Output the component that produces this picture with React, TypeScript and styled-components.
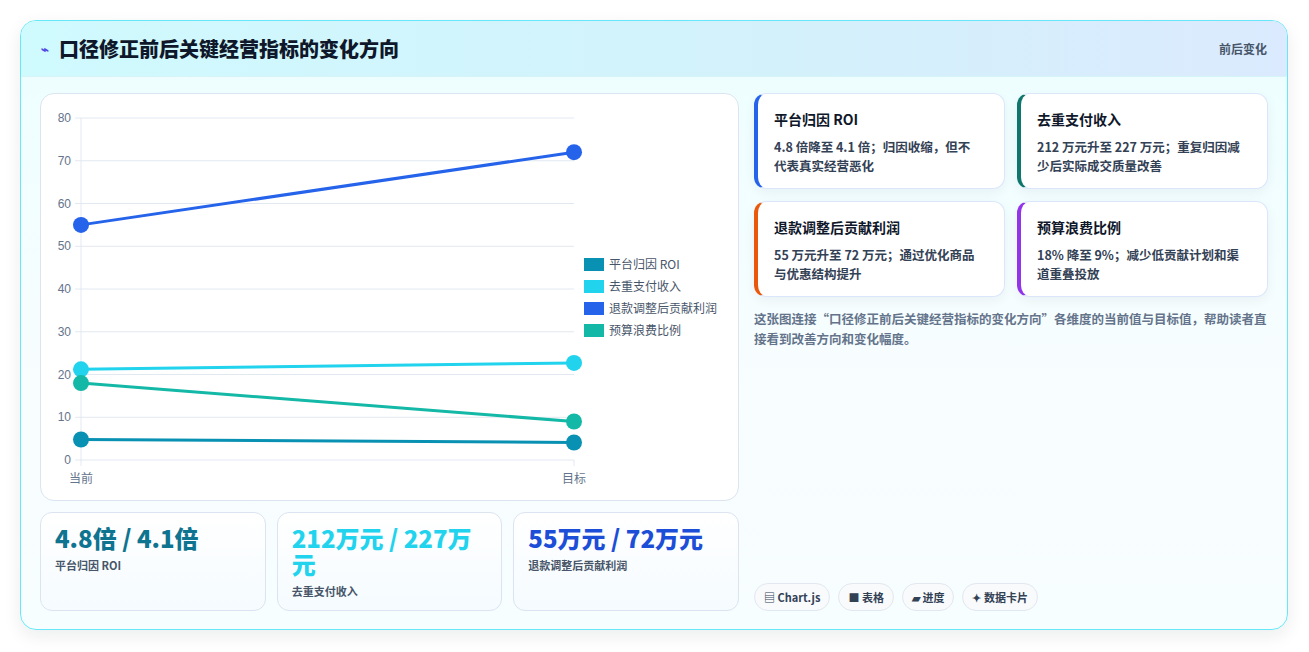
import React from 'react';
import styled, { createGlobalStyle } from 'styled-components';

const Global = createGlobalStyle`
  body { margin: 0; background: #f1f2f4; font-family: "Noto Sans CJK SC", "Noto Sans", sans-serif; }
`;

const series = [
  { name: '平台归因 ROI', color: '#0891b2', a: 4.8, b: 4.1 },
  { name: '去重支付收入', color: '#22d3ee', a: 21.2, b: 22.7 },
  { name: '退款调整后贡献利润', color: '#2563eb', a: 55, b: 72 },
  { name: '预算浪费比例', color: '#14b8a6', a: 18, b: 9 },
];

const insights = [
  { title: '平台归因 ROI', text: '4.8 倍降至 4.1 倍；归因收缩，但不代表真实经营恶化', color: '#2563eb' },
  { title: '去重支付收入', text: '212 万元升至 227 万元；重复归因减少后实际成交质量改善', color: '#0f766e' },
  { title: '退款调整后贡献利润', text: '55 万元升至 72 万元；通过优化商品与优惠结构提升', color: '#ea580c' },
  { title: '预算浪费比例', text: '18% 降至 9%；减少低贡献计划和渠道重叠投放', color: '#9333ea' },
];

const stats = [
  { value: '4.8倍 / 4.1倍', label: '平台归因 ROI', color: '#0e7490' },
  { value: '212万元 / 227万元', label: '去重支付收入', color: '#22d3ee' },
  { value: '55万元 / 72万元', label: '退款调整后贡献利润', color: '#1d4ed8' },
];

const chips = ['▤ Chart.js', '■ 表格', '▰ 进度', '✦ 数据卡片'];

const X0 = 40, X1 = 533, Y0 = 366, PER = 342 / 80;
const yOf = (v: number) => Y0 - v * PER;

function Chart() {
  return (
    <svg width="698" height="406" viewBox="0 0 698 406">
      {[0, 10, 20, 30, 40, 50, 60, 70, 80].map((t) => (
        <g key={t}>
          <line x1={X0 - 6} x2={X1} y1={yOf(t)} y2={yOf(t)} stroke="#e2e8f0" />
          <text x={X0 - 10} y={yOf(t) + 4} textAnchor="end" fontSize="12" fill="#64748b" fontFamily="Liberation Sans, sans-serif">{t}</text>
        </g>
      ))}
      <line x1={X0} x2={X0} y1={yOf(80)} y2={Y0 + 6} stroke="#e2e8f0" />
      <line x1={X1} x2={X1} y1={Y0} y2={Y0 + 6} stroke="#e2e8f0" />
      <text x={X0} y={Y0 + 23} textAnchor="middle" fontSize="12" fill="#64748b">当前</text>
      <text x={X1} y={Y0 + 23} textAnchor="middle" fontSize="12" fill="#64748b">目标</text>
      {series.map((s) => (
        <g key={s.name}>
          <line x1={X0} x2={X1} y1={yOf(s.a)} y2={yOf(s.b)} stroke={s.color} strokeWidth="3" />
          <circle cx={X0} cy={yOf(s.a)} r="8" fill={s.color} />
          <circle cx={X1} cy={yOf(s.b)} r="8" fill={s.color} />
        </g>
      ))}
      {series.map((s, i) => (
        <g key={s.name + 'l'}>
          <rect x={543} y={164 + i * 22} width={20} height={13} fill={s.color} />
          <text x={568} y={175 + i * 22} fontSize="12" fill="#475569">{s.name}</text>
        </g>
      ))}
    </svg>
  );
}

export default function App() {
  return (
    <>
      <Global />
      <Page>
        <Panel>
          <Header>
            <Title><Bolt>⌁</Bolt>口径修正前后关键经营指标的变化方向</Title>
            <Tag>前后变化</Tag>
          </Header>
          <Body>
            <LeftCol>
              <ChartCard><Chart /></ChartCard>
              <StatRow>
                {stats.map((s) => (
                  <StatCard key={s.label}>
                    <StatValue color={s.color}>{s.value}</StatValue>
                    <StatLabel>{s.label}</StatLabel>
                  </StatCard>
                ))}
              </StatRow>
            </LeftCol>
            <RightCol>
              <InsightGrid>
                {insights.map((c) => (
                  <Insight key={c.title} accent={c.color}>
                    <InsightTitle>{c.title}</InsightTitle>
                    <InsightText>{c.text}</InsightText>
                  </Insight>
                ))}
              </InsightGrid>
              <Desc>这张图连接“口径修正前后关键经营指标的变化方向”各维度的当前值与目标值，帮助读者直接看到改善方向和变化幅度。</Desc>
              <Chips>
                {chips.map((c) => <Chip key={c}>{c}</Chip>)}
              </Chips>
            </RightCol>
          </Body>
        </Panel>
      </Page>
    </>
  );
}

const Page = styled.div`
  padding: 20px 20px 0 20px;
  height: 632px;
  background: #fff;
  border-bottom: 1px solid #e5e7eb;
`;

const Panel = styled.div`
  width: 1268px;
  height: 610px;
  box-sizing: border-box;
  border: 1px solid #67e8f9;
  border-radius: 16px;
  overflow: hidden;
  background: linear-gradient(180deg, #ecfeff 0%, #f8fdff 60%, #f7feff 100%);
  box-shadow: 0 6px 18px rgba(15, 23, 42, 0.08);
  display: flex;
  flex-direction: column;
`;

const Header = styled.div`
  height: 55px;
  flex: none;
  display: flex;
  align-items: center;
  justify-content: space-between;
  padding: 0 20px;
  background: linear-gradient(90deg, #cffafe 0%, #d3f1fb 60%, #dbeafe 100%);
  border-bottom: 1px solid #d6f3f8;
`;

const Title = styled.h1`
  margin: 0;
  font-size: 20px;
  font-weight: 800;
  color: #0f172a;
  display: flex;
  align-items: center;
  gap: 10px;
`;

const Bolt = styled.span`
  font-size: 13px;
  color: #4f46e5;
`;

const Tag = styled.span`
  font-size: 12px;
  font-weight: 700;
  color: #475569;
`;

const Body = styled.div`
  flex: 1;
  display: flex;
  gap: 15px;
  padding: 16px 19px 19px 19px;
`;

const LeftCol = styled.div`
  width: 699px;
  display: flex;
  flex-direction: column;
  gap: 11px;
`;

const ChartCard = styled.div`
  height: 408px;
  box-sizing: border-box;
  background: #fff;
  border: 1px solid #dbe4f0;
  border-radius: 14px;
  overflow: hidden;
`;

const StatRow = styled.div`
  display: grid;
  grid-template-columns: repeat(3, 1fr);
  gap: 11px;
`;

const StatCard = styled.div`
  height: 99px;
  box-sizing: border-box;
  padding: 12px 14px;
  border: 1px solid #dbe4f0;
  border-radius: 12px;
  background: linear-gradient(180deg, #fff, #f5fbff);
`;

const StatValue = styled.div<{ color: string }>`
  font-size: 24px;
  font-weight: 800;
  line-height: 26px;
  color: ${(p) => p.color};
`;

const StatLabel = styled.div`
  margin-top: 6px;
  font-size: 11px;
  font-weight: 700;
  color: #475569;
`;

const RightCol = styled.div`
  flex: 1;
  display: flex;
  flex-direction: column;
`;

const InsightGrid = styled.div`
  display: grid;
  grid-template-columns: 1fr 1fr;
  gap: 12px;
`;

const Insight = styled.div<{ accent: string }>`
  height: 96px;
  box-sizing: border-box;
  padding: 15px 22px 0 16px;
  background: #fff;
  border: 1px solid #dbe6fb;
  border-left: 4px solid ${(p) => p.accent};
  border-radius: 12px;
  box-shadow: 0 4px 12px rgba(15, 23, 42, 0.05);
`;

const InsightTitle = styled.div`
  font-size: 14px;
  font-weight: 700;
  color: #0f172a;
  margin-bottom: 8px;
`;

const InsightText = styled.div`
  font-size: 12.5px;
  font-weight: 700;
  line-height: 19px;
  color: #334155;
`;

const Desc = styled.p`
  margin: 12px 0 0;
  font-size: 12.5px;
  font-weight: 700;
  line-height: 20px;
  color: #64748b;
`;

const Chips = styled.div`
  margin-top: auto;
  display: flex;
  gap: 8px;
`;

const Chip = styled.span`
  padding: 5px 9px;
  font-size: 11px;
  font-weight: 700;
  color: #334155;
  background: #f8fafc;
  border: 1px solid #e2e8f0;
  border-radius: 14px;
`;
